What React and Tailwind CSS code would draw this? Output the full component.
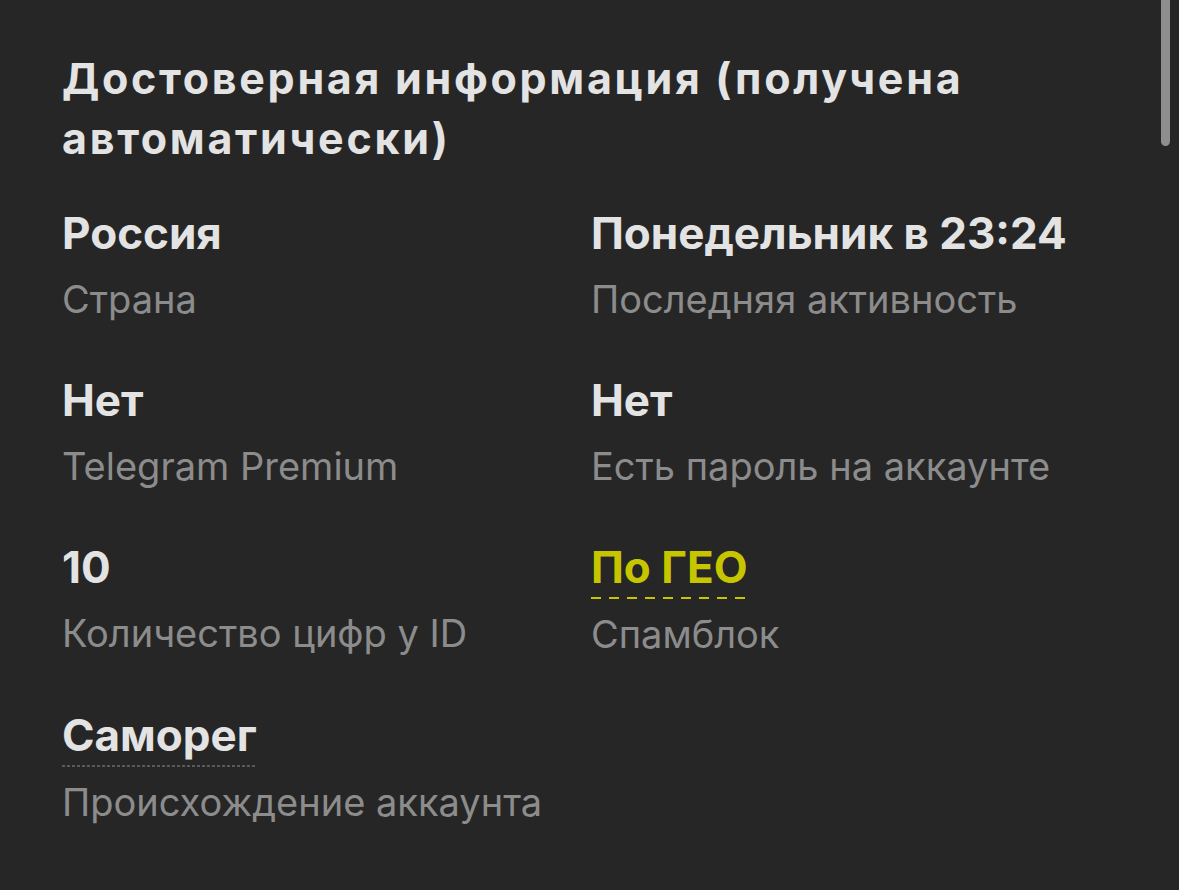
export default function App() {
  const items = [
    { v: "Россия", l: "Страна" },
    { v: "Понедельник в 23:24", l: "Последняя активность" },
    { v: "Нет", l: "Telegram Premium" },
    { v: "Нет", l: "Есть пароль на аккаунте" },
    { v: "10", l: "Количество цифр у ID" },
    { v: "По ГЕО", l: "Спамблок", kind: "geo" },
    { v: "Саморег", l: "Происхождение аккаунта", kind: "dot" },
  ];
  return (
    <div className="relative w-[1179px] h-[890px] overflow-hidden bg-[#262626]" style={{ fontFamily: "Inter, Roboto, 'Noto Sans', sans-serif" }}>
      <div className="absolute right-[9px] top-0 w-[9px] h-[146px] rounded-b-full bg-[#8e8e8e]" />
      <div className="pl-[62px] pr-[100px] pt-[48px]">
        <h1 className="text-[43px] leading-[60px] font-bold text-[#e3e3e3] tracking-[2.7px]">
          Достоверная информация (получена автоматически)
        </h1>
        <div className="mt-[40px] grid grid-cols-[529px_1fr] gap-y-[51px]">
          {items.map((it, i) => (
            <div key={i} className="flex flex-col items-start">
              {it.kind === "geo" ? (
                <span className="text-[44px] leading-[50px] font-bold text-[#c6c500] pb-[7px] bg-[repeating-linear-gradient(to_right,#c6c500_0_10px,transparent_10px_18px)] bg-[length:100%_2px] bg-bottom bg-no-repeat">
                  {it.v}
                </span>
              ) : it.kind === "dot" ? (
                <span className="text-[44px] leading-[50px] font-bold text-[#e3e3e3] pb-[7px] bg-[repeating-linear-gradient(to_right,#5a5a5a_0_3px,transparent_3px_5px)] bg-[length:100%_2px] bg-bottom bg-no-repeat">
                  {it.v}
                </span>
              ) : (
                <span className="text-[44px] leading-[50px] font-bold text-[#e3e3e3]">{it.v}</span>
              )}
              <span className={`text-[38px] leading-[50px] text-[#8c8c8c] ${it.kind ? "mt-[10px]" : "mt-[16px]"}`}>{it.l}</span>
            </div>
          ))}
        </div>
      </div>
    </div>
  );
}
